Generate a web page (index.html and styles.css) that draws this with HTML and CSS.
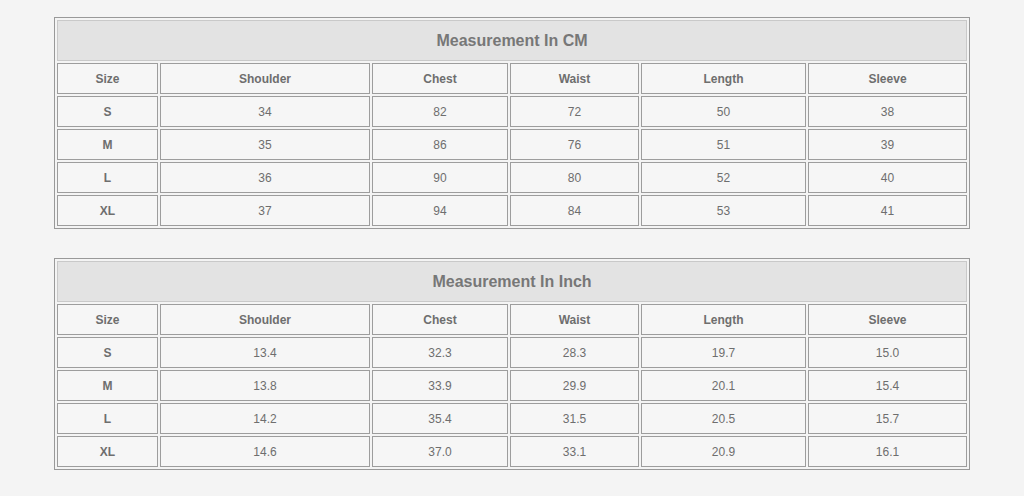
FILE: index.html
```html
<!DOCTYPE html>
<html>
<head>
<meta charset="utf-8">
<link rel="stylesheet" href="styles.css">
</head>
<body>
<div class="page">
  <table class="chart">
    <colgroup>
      <col class="c-size"><col class="c-shoulder"><col class="c-chest"><col class="c-waist"><col class="c-length"><col class="c-sleeve">
    </colgroup>
    <tr><th class="title" colspan="6">Measurement In CM</th></tr>
    <tr class="head"><th>Size</th><th>Shoulder</th><th>Chest</th><th>Waist</th><th>Length</th><th>Sleeve</th></tr>
    <tr><th>S</th><td>34</td><td>82</td><td>72</td><td>50</td><td>38</td></tr>
    <tr><th>M</th><td>35</td><td>86</td><td>76</td><td>51</td><td>39</td></tr>
    <tr><th>L</th><td>36</td><td>90</td><td>80</td><td>52</td><td>40</td></tr>
    <tr><th>XL</th><td>37</td><td>94</td><td>84</td><td>53</td><td>41</td></tr>
  </table>
  <table class="chart">
    <colgroup>
      <col class="c-size"><col class="c-shoulder"><col class="c-chest"><col class="c-waist"><col class="c-length"><col class="c-sleeve">
    </colgroup>
    <tr><th class="title" colspan="6">Measurement In Inch</th></tr>
    <tr class="head"><th>Size</th><th>Shoulder</th><th>Chest</th><th>Waist</th><th>Length</th><th>Sleeve</th></tr>
    <tr><th>S</th><td>13.4</td><td>32.3</td><td>28.3</td><td>19.7</td><td>15.0</td></tr>
    <tr><th>M</th><td>13.8</td><td>33.9</td><td>29.9</td><td>20.1</td><td>15.4</td></tr>
    <tr><th>L</th><td>14.2</td><td>35.4</td><td>31.5</td><td>20.5</td><td>15.7</td></tr>
    <tr><th>XL</th><td>14.6</td><td>37.0</td><td>33.1</td><td>20.9</td><td>16.1</td></tr>
  </table>
</div>
</body>
</html>
```
FILE: styles.css
```css
html, body {
  margin: 0;
  padding: 0;
  background: #f4f4f4;
}
.page {
  display: flex;
  flex-direction: column;
  gap: 29px;
  padding: 17px 0 0 54px;
  font-family: "Liberation Sans", Arial, sans-serif;
  color: #6e6e6e;
}
.chart {
  width: 916px;
  border: 1px solid #999999;
  border-collapse: separate;
  border-spacing: 2px;
  table-layout: fixed;
  background: #f4f4f4;
}
.c-size { width: 101px; }
.c-shoulder { width: 210px; }
.c-chest { width: 136px; }
.c-waist { width: 129px; }
.c-length { width: 165px; }
.c-sleeve { width: 159px; }
.chart th, .chart td {
  border: 1px solid #9d9d9d;
  height: 31px;
  padding: 0;
  text-align: center;
  font-size: 12px;
  background: #f6f6f6;
  box-sizing: border-box;
}
.chart th {
  font-weight: bold;
  color: #6e6e6e;
}
.chart td {
  font-weight: normal;
  color: #6e6e6e;
}
.chart .title {
  height: 41px;
  background: #e3e3e3;
  border-color: #c9c9c9;
  font-size: 16px;
  color: #777777;
}
```
